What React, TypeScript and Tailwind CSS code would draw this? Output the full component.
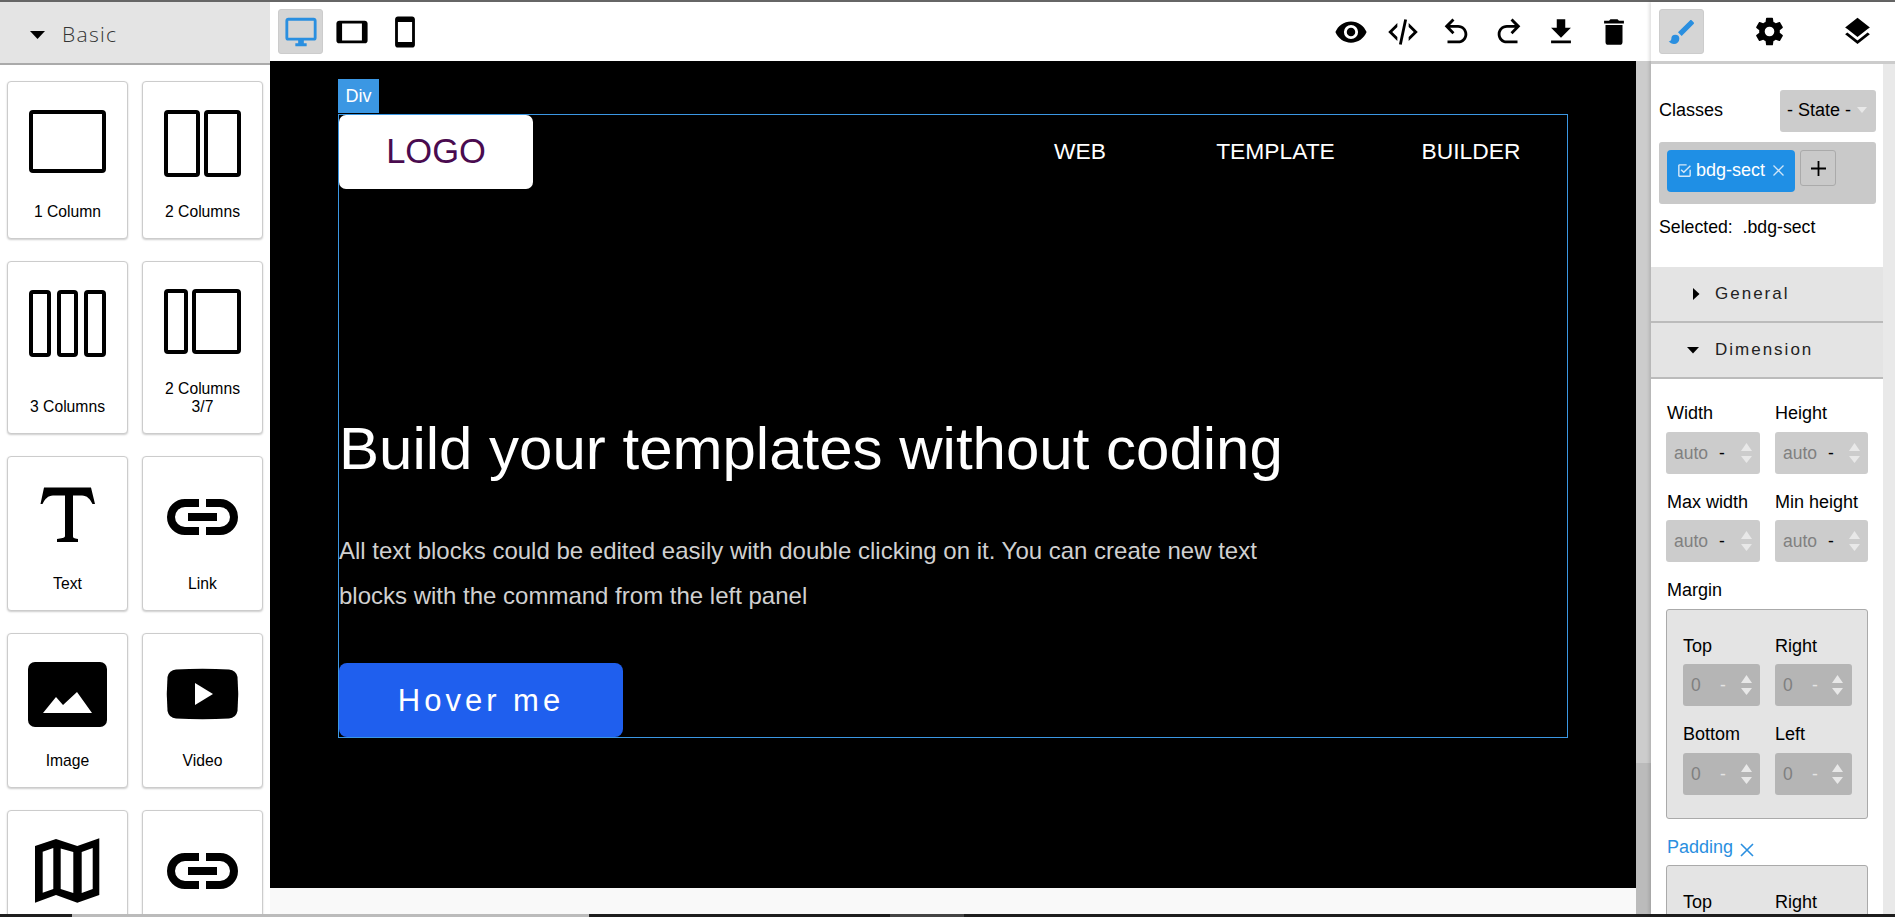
import type { ReactNode } from "react";

const P = ({ d, size = 34, color = "#000" }: { d: string; size?: number; color?: string }) => (
  <svg width={size} height={size} viewBox="0 0 24 24" fill={color}><path d={d} /></svg>
);

const icons = {
  monitor: "M21,16H3V4H21M21,2H3C1.89,2 1,2.89 1,4V16A2,2 0 0,0 3,18H10V20H8V22H16V20H14V18H21A2,2 0 0,0 23,16V4C23,2.89 22.1,2 21,2Z",
  tablet: "M19,18H5V6H19M21,4H3C1.89,4 1,4.89 1,6V18A2,2 0 0,0 3,20H21A2,2 0 0,0 23,18V6C23,4.89 22.1,4 21,4Z",
  phone: "M17,19H7V5H17M17,1H7C5.89,1 5,1.89 5,3V21A2,2 0 0,0 7,23H17A2,2 0 0,0 19,21V3C19,1.89 18.1,1 17,1Z",
  eye: "M12,9A3,3 0 0,0 9,12A3,3 0 0,0 12,15A3,3 0 0,0 15,12A3,3 0 0,0 12,9M12,17A5,5 0 0,1 7,12A5,5 0 0,1 12,7A5,5 0 0,1 17,12A5,5 0 0,1 12,17M12,4.5C7,4.5 2.73,7.61 1,12C2.73,16.39 7,19.5 12,19.5C17,19.5 21.27,16.39 23,12C21.27,7.61 17,4.5 12,4.5Z",
  code: "M12.89,3L14.85,3.4L11.11,21L9.15,20.6L12.89,3M19.59,12L16,8.41V5.58L22.42,12L16,18.41V15.58L19.59,12M1.58,12L8,5.58V8.41L4.41,12L8,15.58V18.41L1.58,12Z",
  undo: "M20 13.5C20 17.09 17.09 20 13.5 20H6V18H13.5C16 18 18 16 18 13.5S16 9 13.5 9H7.83L10.91 12.09L9.5 13.5L4 8L9.5 2.5L10.92 3.91L7.83 7H13.5C17.09 7 20 9.91 20 13.5Z",
  redo: "M10.5 18H18V20H10.5C6.91 20 4 17.09 4 13.5S6.91 7 10.5 7H16.17L13.08 3.91L14.5 2.5L20 8L14.5 13.5L13.09 12.09L16.17 9H10.5C8 9 6 11 6 13.5S8 18 10.5 18Z",
  download: "M5,20H19V18H5M19,9H15V3H9V9H5L12,16L19,9Z",
  trash: "M19,4H15.5L14.5,3H9.5L8.5,4H5V6H19M6,19A2,2 0 0,0 8,21H16A2,2 0 0,0 18,19V7H6V19Z",
  brush: "M20.71,4.63L19.37,3.29C19,2.9 18.35,2.9 17.96,3.29L9,12.25L11.75,15L20.71,6.04C21.1,5.65 21.1,5 20.71,4.63M7,14A3,3 0 0,0 4,17C4,18.31 2.84,19 2,19C2.92,20.22 4.5,21 6,21A4,4 0 0,0 10,17A3,3 0 0,0 7,14Z",
  cog: "M12,15.5A3.5,3.5 0 0,1 8.5,12A3.5,3.5 0 0,1 12,8.5A3.5,3.5 0 0,1 15.5,12A3.5,3.5 0 0,1 12,15.5M19.43,12.97C19.47,12.65 19.5,12.33 19.5,12C19.5,11.67 19.47,11.34 19.43,11L21.54,9.37C21.73,9.22 21.78,8.95 21.66,8.73L19.66,5.27C19.54,5.05 19.27,4.96 19.05,5.05L16.56,6.05C16.04,5.66 15.5,5.32 14.87,5.07L14.5,2.42C14.46,2.18 14.25,2 14,2H10C9.75,2 9.54,2.18 9.5,2.42L9.13,5.07C8.5,5.32 7.96,5.66 7.44,6.05L4.95,5.05C4.73,4.96 4.46,5.05 4.34,5.27L2.34,8.73C2.21,8.95 2.27,9.22 2.46,9.37L4.57,11C4.53,11.34 4.5,11.67 4.5,12C4.5,12.33 4.53,12.65 4.57,12.97L2.46,14.63C2.27,14.78 2.21,15.05 2.34,15.27L4.34,18.73C4.46,18.95 4.73,19.03 4.95,18.95L7.44,17.94C7.96,18.34 8.5,18.68 9.13,18.93L9.5,21.58C9.54,21.82 9.75,22 10,22H14C14.25,22 14.46,21.82 14.5,21.58L14.87,18.93C15.5,18.67 16.04,18.34 16.56,17.94L19.05,18.95C19.27,19.03 19.54,18.95 19.66,18.73L21.66,15.27C21.78,15.05 21.73,14.78 21.54,14.63L19.43,12.97Z",
  layers: "M12,16L19.36,10.27L21,9L12,2L3,9L4.63,10.27M12,18.54L4.62,12.81L3,14.07L12,21.07L21,14.07L19.37,12.8L12,18.54Z",
  check: "M19,19H5V5H15V3H5C3.89,3 3,3.89 3,5V19A2,2 0 0,0 5,21H19A2,2 0 0,0 21,19V11H19M7.91,10.08L6.5,11.5L11,16L21,6L19.59,4.58L11,13.17L7.91,10.08Z",
};

const Cols = ({ rects }: { rects: number[][] }) => (
  <>
    {rects.map(([x1, y1, x2, y2], i) => (
      <rect key={i} x={x1 + 2} y={y1 + 2} width={x2 - x1 - 4} height={y2 - y1 - 4} rx={2} fill="none" stroke="#000" strokeWidth={4} />
    ))}
  </>
);

const LinkIcon = () => (
  <>
    <path d="M57 47H43a14 14 0 0 0 0 28H57M64 47H78a14 14 0 0 1 0 28H64" fill="none" stroke="#000" strokeWidth={8} />
    <rect x={46} y={57} width={29} height={8} fill="#000" />
  </>
);

const Block = ({ label, h, children }: { label: string[]; h: string; children: ReactNode }) => (
  <div className={`w-[121px] ${h} shrink-0 flex flex-col items-center bg-white border border-[#ccc] rounded-[4px] shadow-[0_1px_2px_rgba(0,0,0,0.2)] overflow-hidden pb-[17px]`}>
    <svg width={119} height={100} viewBox="1 1 119 100" className="shrink-0">{children}</svg>
    <div className="mt-auto text-[15.7px] leading-[18px] text-center text-black">
      {label.map((l) => (
        <div key={l}>{l}</div>
      ))}
    </div>
  </div>
);

const Arrows = ({ className = "" }: { className?: string }) => (
  <svg width={11} height={22} viewBox="0 0 11 22" className={className} fill="#e8e8e8">
    <path d="M5.5 1L11 9H0Z" />
    <path d="M0 14H11L5.5 21Z" />
  </svg>
);

const Field = ({ value, w, bg, dash, textW, mr = "mr-[8px]" }: { value: string; w: string; bg: string; dash: string; textW: string; mr?: string }) => (
  <div className={`${w} h-[42px] ${bg} rounded-[3px] flex items-center pl-[8px] text-[17.5px]`}>
    <span className={`${textW} text-[#808080]`}>{value}</span>
    <span className={dash}>-</span>
    <Arrows className={`ml-auto ${mr}`} />
  </div>
);

const Label = ({ children, className = "" }: { children: ReactNode; className?: string }) => (
  <div className={`text-[18px] leading-[20px] text-black ${className}`}>{children}</div>
);

const Section = ({ title, open, pl, gap }: { title: string; open: boolean; pl: string; gap: string }) => (
  <div className={`h-[56px] bg-[#e4e4e4] border-b-2 border-[#bbb] flex items-center ${pl} ${gap}`}>
    <svg width={open ? 12 : 7} height={open ? 7 : 12} viewBox={open ? "0 0 12 7" : "0 0 7 12"} fill="#000">
      <path d={open ? "M0 0H12L6 6.5Z" : "M0 0L6.5 6L0 12Z"} />
    </svg>
    <span className="text-[17px] tracking-[2px] text-[#222]">{title}</span>
  </div>
);

export default function App() {
  return (
    <div className="w-[1895px] h-[917px] overflow-hidden flex flex-col bg-white font-['Liberation_Sans',Arial,sans-serif] text-black">
      <div className="h-[2px] bg-[#666] shrink-0" />
      <div className="flex-1 min-h-0 flex">
        {/* left panel */}
        <div className="w-[270px] shrink-0 flex flex-col overflow-hidden">
          <div className="h-[63px] shrink-0 bg-[#e4e4e4] border-b-2 border-[#aaa] flex items-center pl-[30px] gap-[17px] pt-[4px]">
            <svg width={15} height={8} viewBox="0 0 15 8" fill="#000"><path d="M0 0H15L7.5 8Z" /></svg>
            <span className="font-['Open_Sans',sans-serif] font-light text-[21px] tracking-[1.3px] text-[#333]">Basic</span>
          </div>
          <div className="grid grid-cols-[121px_121px] gap-x-[14px] gap-y-[22px] pl-[7px] pt-[16px] content-start">
            <Block label={["1 Column"]} h="h-[158px]"><Cols rects={[[22, 29, 99, 92]]} /></Block>
            <Block label={["2 Columns"]} h="h-[158px]"><Cols rects={[[22, 29, 58, 96], [62, 29, 99, 96]]} /></Block>
            <Block label={["3 Columns"]} h="h-[173px]"><Cols rects={[[22, 29, 44, 96], [50, 29, 71, 96], [77, 29, 99, 96]]} /></Block>
            <Block label={["2 Columns", "3/7"]} h="h-[173px]"><Cols rects={[[22, 28, 46, 93], [50, 28, 99, 93]]} /></Block>
            <Block label={["Text"]} h="h-[155px]">
              <path d="M37 31.5H84L88 48H85.5C83 43 80 39.5 75 39.5H66V80C66 82 67 82.5 71 83V86H50V83C54 82.5 58 82 58 80V39.5H46C41 39.5 38 43 35.5 48H33.500Z" fill="#000" />
            </Block>
            <Block label={["Link"]} h="h-[155px]"><LinkIcon /></Block>
            <Block label={["Image"]} h="h-[155px]">
              <rect x={21} y={29} width={79} height={65} rx={7} fill="#000" />
              <path d="M36 80L49 64L56 72L70 59L85 80Z" fill="#fff" />
            </Block>
            <Block label={["Video"]} h="h-[155px]">
              <path d="M34 36.5Q60.5 35 87 36.5Q94 37 95.500 44Q97 61 95.500 78Q94 85 87 85.5Q60.5 87 34 85.5Q27 85 25.500 78Q24 61 25.500 44Q27 37 34 36.5Z" fill="#000" />
              <path d="M53 50L71 61L53 72Z" fill="#fff" />
            </Block>
            <Block label={[]} h="h-[155px]">
              <path fillRule="evenodd" d="M28 36L49 29L70.300 36L92.300 28.300V85L70.300 92.700L49 85L28 92.700ZM35.700 41.700L46.300 38V79L35.700 82.700ZM53.700 38.500L66.300 42V83L53.700 79ZM74.700 42L85.700 38V79L74.700 83Z" fill="#000" />
            </Block>
            <Block label={[]} h="h-[155px]"><LinkIcon /></Block>
          </div>
        </div>

        {/* center */}
        <div className="w-[1381px] shrink-0 flex flex-col">
          <div className="h-[59px] shrink-0 bg-white flex items-center pl-[8px]">
            <div className="w-[45px] h-[45px] bg-[#d5d5d5] border border-[#ccc] rounded-[3px] flex items-center justify-center">
              <P d={icons.monitor} color="#2a8fe0" />
            </div>
            <div className="ml-[12px] flex gap-[19px]">
              <P d={icons.tablet} />
              <P d={icons.phone} />
            </div>
            <div className="ml-auto mr-[20px] flex gap-[18.700px]">
              <P d={icons.eye} />
              <P d={icons.code} />
              <P d={icons.undo} />
              <P d={icons.redo} />
              <P d={icons.download} />
              <P d={icons.trash} />
            </div>
          </div>
          <div className="flex-1 min-h-0 flex">
            <div className="w-[1366px] shrink-0 flex flex-col bg-[#f9f9f9]">
              <div className="h-[827px] bg-black pl-[68px] pt-[18px] shrink-0">
                <div className="w-[41px] h-[34px] bg-[#3b97e3] text-white text-[18px] flex items-center justify-center">Div</div>
                <div className="w-[1230px] h-[624px] mt-px border border-[#3b97e3]">
                  <div className="flex items-center h-[74px]">
                    <div className="w-[194px] h-[74px] bg-white rounded-[7px] flex items-center justify-center text-[34.500px] text-[#4a0b4f]">LOGO</div>
                    <div className="ml-auto flex items-center text-[22.800px] text-white pb-[2px]">
                      <span className="w-[160px] text-center">WEB</span>
                      <span className="w-[231px] text-center">TEMPLATE</span>
                      <span className="w-[160px] text-center mr-[16px]">BUILDER</span>
                    </div>
                  </div>
                  <h1 className="mt-[224px] text-[60px] leading-[71px] font-normal text-white">Build your templates without coding</h1>
                  <p className="mt-[44px] w-[980px] text-[24px] leading-[45px] text-[#d0d0d0]">
                    All text blocks could be edited easily with double clicking on it. You can create new text blocks with the command from the left panel
                  </p>
                  <div className="mt-[45px] w-[284px] h-[74px] bg-[#1f5fee] rounded-[8px] flex items-center justify-center text-[31px] tracking-[4px] text-white pt-[3px]">Hover me</div>
                </div>
              </div>
            </div>
            <div className="w-[15px] shrink-0 flex flex-col">
              <div className="h-[702px] bg-[#cccccc]" />
              <div className="flex-1 bg-[#bbbbbb]" />
            </div>
          </div>
        </div>

        {/* right */}
        <div className="flex-1 flex flex-col min-w-0 relative shadow-[-2px_0_3px_rgba(0,0,0,0.12)]">
          <div className="h-[62px] shrink-0 bg-white border-b-[3px] border-[#ccc] flex items-center pl-[8px]">
            <div className="w-[45px] h-[45px] bg-[#d5d5d5] border border-[#ccc] rounded-[3px] flex items-center justify-center">
              <P d={icons.brush} size={32} color="#2a8fe0" />
            </div>
            <div className="ml-[49px]"><P d={icons.cog} size={33} /></div>
            <div className="ml-[55px]"><P d={icons.layers} size={33} /></div>
          </div>
          <div className="flex-1 min-h-0 flex overflow-hidden">
            <div className="w-[232px] shrink-0 bg-white">
              <div className="pl-[8px] pr-[7px] pt-[26px]">
                <div className="flex items-center justify-between h-[42px]">
                  <span className="text-[18px] pb-[2px]">Classes</span>
                  <div className="w-[96px] h-[42px] bg-[#ccc] rounded-[3px] flex items-center pl-[7px] text-[18px] pb-[2px]">
                    - State -
                    <svg width={10} height={6} viewBox="0 0 10 6" fill="#e8e8e8" className="ml-[6px]"><path d="M0 0H10L5 6Z" /></svg>
                  </div>
                </div>
                <div className="mt-[10px] h-[62px] bg-[#c9c9c9] rounded-[3px] p-[8px] flex items-start gap-[5px]">
                  <div className="w-[128px] h-[42px] bg-[#1f8fe5] rounded-[4px] flex items-center pl-[9px] pb-[2px] text-white text-[18px] gap-[3px]">
                    <P d={icons.check} size={17} color="#d5e9f9" />
                    <span>bdg-sect</span>
                    <svg width={11} height={11} viewBox="0 0 11 11" stroke="#cfe5f8" strokeWidth={1.300} className="ml-[5px]"><path d="M0.5 0.5L10.500 10.500M10.500 0.5L0.5 10.500" /></svg>
                  </div>
                  <div className="w-[36px] h-[36px] border border-[#aaa] rounded-[3px] flex items-center justify-center">
                    <svg width={15} height={15} viewBox="0 0 15 15" fill="#000"><path d="M6.600 0H8.400V6.600H15V8.400H8.400V15H6.600V8.400H0V6.600H6.600Z" /></svg>
                  </div>
                </div>
                <div className="mt-[14px] h-[18px] mb-[31px] text-[17.700px] leading-[18px] whitespace-pre">Selected:  .bdg-sect</div>
              </div>
              <Section title="General" open={false} pl="pl-[42px]" gap="gap-[15px]" />
              <Section title="Dimension" open={true} pl="pl-[36px]" gap="gap-[16px]" />
              <div className="pl-[15px] pt-[24px]">
                <div className="grid grid-cols-[94px_93px] gap-x-[15px]">
                  <div>
                    <Label className="pl-[1px]">Width</Label>
                    <div className="mt-[9px]"><Field value="auto" w="w-[94px]" bg="bg-[#ccc]" dash="text-black" textW="w-[45px]" /></div>
                  </div>
                  <div>
                    <Label>Height</Label>
                    <div className="mt-[9px]"><Field value="auto" w="w-[93px]" bg="bg-[#ccc]" dash="text-black" textW="w-[45px]" /></div>
                  </div>
                  <div className="mt-[18px]">
                    <Label className="pl-[1px]">Max width</Label>
                    <div className="mt-[8px]"><Field value="auto" w="w-[94px]" bg="bg-[#ccc]" dash="text-black" textW="w-[45px]" /></div>
                  </div>
                  <div className="mt-[18px]">
                    <Label>Min height</Label>
                    <div className="mt-[8px]"><Field value="auto" w="w-[93px]" bg="bg-[#ccc]" dash="text-black" textW="w-[45px]" /></div>
                  </div>
                </div>
                <Label className="mt-[18px] pl-[1px]">Margin</Label>
                <div className="mt-[9px] w-[202px] h-[210px] bg-[#e4e4e4] border border-[#aaa] rounded-[3px] pl-[16px] pt-[26px]">
                  <div className="grid grid-cols-[77px_77px] gap-x-[15px]">
                    <div>
                      <Label>Top</Label>
                      <div className="mt-[8px]"><Field value="0" w="w-[77px]" bg="bg-[#b5b5b5]" dash="text-[#e4e4e4]" textW="w-[29px]" /></div>
                    </div>
                    <div>
                      <Label>Right</Label>
                      <div className="mt-[8px]"><Field value="0" w="w-[77px]" bg="bg-[#b5b5b5]" dash="text-[#e4e4e4]" textW="w-[29px]" mr="mr-[9px]" /></div>
                    </div>
                    <div className="mt-[18px]">
                      <Label>Bottom</Label>
                      <div className="mt-[9px]"><Field value="0" w="w-[77px]" bg="bg-[#b5b5b5]" dash="text-[#e4e4e4]" textW="w-[29px]" /></div>
                    </div>
                    <div className="mt-[18px]">
                      <Label>Left</Label>
                      <div className="mt-[9px]"><Field value="0" w="w-[77px]" bg="bg-[#b5b5b5]" dash="text-[#e4e4e4]" textW="w-[29px]" mr="mr-[9px]" /></div>
                    </div>
                  </div>
                </div>
                <div className="mt-[18px] pl-[1px] flex items-center gap-[7px] text-[18px] leading-[20px] text-[#2a8fe0]">
                  Padding
                  <svg width={14} height={14} viewBox="0 0 14 14" stroke="#2a8fe0" strokeWidth={1.600} className="mt-[6px]"><path d="M1 1L13 13M13 1L1 13" /></svg>
                </div>
                <div className="mt-[8px] w-[202px] h-[210px] bg-[#e4e4e4] border border-[#aaa] rounded-[3px] pl-[16px] pt-[26px]">
                  <div className="grid grid-cols-[77px_77px] gap-x-[15px]">
                    <Label>Top</Label>
                    <Label>Right</Label>
                  </div>
                </div>
              </div>
            </div>
            <div className="flex-1 bg-[#e9e9e9]" />
          </div>
        </div>
      </div>
      <div className="h-[3px] shrink-0 flex bg-[#1e1e1e]">
        <div className="w-[72px]" />
        <div className="w-[517px] bg-[#bbb]" />
        <div className="w-[301px]" />
        <div className="w-[74px] bg-[#444]" />
      </div>
    </div>
  );
}
